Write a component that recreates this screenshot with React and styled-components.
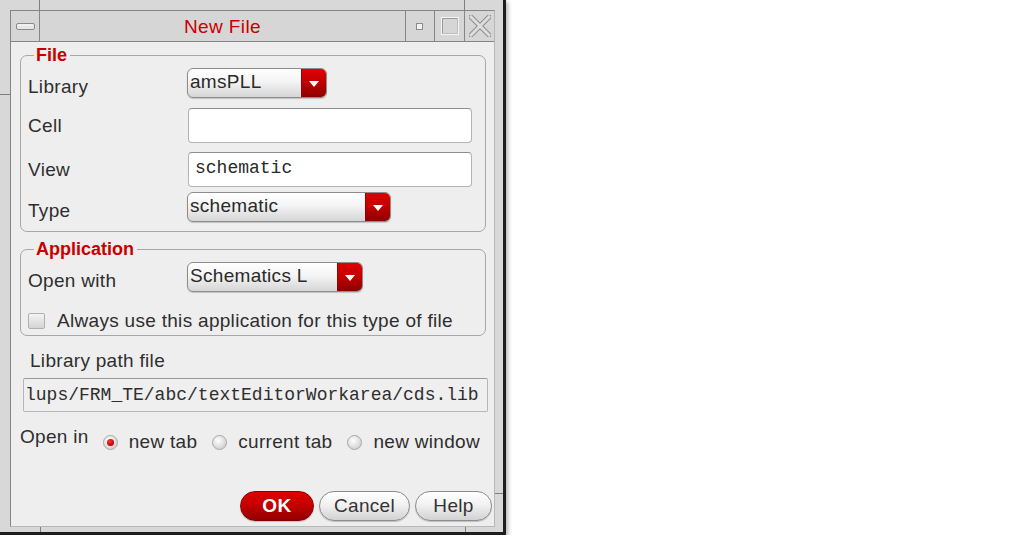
import React from 'react'
import styled, { createGlobalStyle } from 'styled-components'

const GlobalStyle = createGlobalStyle`
  body {
    margin: 0;
    background: #ffffff;
    font-family: 'Liberation Sans', Arial, sans-serif;
  }
`

const RED = '#c80000'
const TEXT = '#2e2e2e'

export default function App() {
  return (
    <>
      <GlobalStyle />
      <WindowStyled>
        <Tick $x={39} $y={0} $w={1} $h={10} />
        <Tick $x={464} $y={0} $w={1} $h={10} />
        <Tick $x={0} $y={94} $w={10} $h={1} />
        <Tick $x={495} $y={493} $w={8} $h={1} />
        <Tick $x={40} $y={527} $w={1} $h={5} />
        <Tick $x={465} $y={527} $w={1} $h={5} />
        <InnerStyled>
          <TitleBar>
            <TitleButton>
              <MinimizeIcon />
            </TitleButton>
            <Title>New File</Title>
            <TitleButton>
              <DotIcon />
            </TitleButton>
            <TitleButton>
              <MaximizeIcon />
            </TitleButton>
            <TitleButton>
              <CloseIcon />
            </TitleButton>
          </TitleBar>

          <Content>
            <Group $bottom={9}>
              <Legend>File</Legend>
              <FieldGrid>
                <Label $drop>Library</Label>
                <Select $width={140} value="amsPLL" />
                <Label $top={10}>Cell</Label>
                <TextInput $top={10} />
                <Label $top={9}>View</Label>
                <TextInput $top={9}>schematic</TextInput>
                <Label $top={5} $drop>Type</Label>
                <Select $width={204} $top={5} value="schematic" />
              </FieldGrid>
            </Group>

            <Group $top={7} $bottom={3}>
              <Legend>Application</Legend>
              <FieldGrid>
                <Label $drop>Open with</Label>
                <Select $width={176} value="Schematics L" />
              </FieldGrid>
              <CheckRow>
                <CheckBox />
                <span>Always use this application for this type of file</span>
              </CheckRow>
            </Group>

            <PathLabel>Library path file</PathLabel>
            <PathField>lups/FRM_TE/abc/textEditorWorkarea/cds.lib</PathField>

            <OpenInRow>
              <span>Open in</span>
              <RadioGroup>
                <RadioOption>
                  <Radio $checked />
                  new tab
                </RadioOption>
                <RadioOption>
                  <Radio />
                  current tab
                </RadioOption>
                <RadioOption>
                  <Radio />
                  new window
                </RadioOption>
              </RadioGroup>
            </OpenInRow>

            <ButtonRow>
              <Button $primary $width={74}>OK</Button>
              <Button $width={91}>Cancel</Button>
              <Button $width={77}>Help</Button>
            </ButtonRow>
          </Content>
        </InnerStyled>
      </WindowStyled>
    </>
  )
}

function Select({ value, $width, $top }) {
  return (
    <SelectStyled $width={$width} $top={$top}>
      <span>{value}</span>
      <SelectArrow />
    </SelectStyled>
  )
}

function MinimizeIcon() {
  return (
    <svg width="19" height="7" viewBox="0 0 19 7">
      <rect x="0.5" y="0.5" width="18" height="6" rx="1.5" fill="#e6e6e6" stroke="#8a8a8a" />
      <line x1="2" y1="2" x2="17" y2="2" stroke="#fafafa" />
    </svg>
  )
}

function DotIcon() {
  return (
    <svg width="7" height="7" viewBox="0 0 7 7">
      <rect x="0.5" y="0.5" width="6" height="6" fill="#f2f2f2" stroke="#8a8a8a" />
    </svg>
  )
}

function MaximizeIcon() {
  return (
    <svg width="18" height="18" viewBox="0 0 18 18">
      <rect x="0.5" y="0.5" width="17" height="17" fill="none" stroke="#f4f4f4" />
      <path d="M1.5 16.5 V1.5 H16.5" fill="none" stroke="#9a9a9a" />
      <path d="M1.5 16.5 H16.5 V1.5" fill="none" stroke="#bdbdbd" />
    </svg>
  )
}

function CloseIcon() {
  return (
    <svg width="22" height="22" viewBox="0 0 22 22">
      <path d="M2 2 L20 20 M20 2 L2 20" stroke="#8e8e8e" strokeWidth="5" strokeLinecap="square" />
      <path d="M2 2 L20 20 M20 2 L2 20" stroke="#dedede" strokeWidth="3" strokeLinecap="square" />
    </svg>
  )
}

const WindowStyled = styled.div`
  position: relative;
  box-sizing: border-box;
  width: 506px;
  height: 535px;
  padding: 10px 8px 5px 10px;
  background: #d8d8d8;
  border-right: 3px solid #1e1e1e;
  border-bottom: 3px solid #1e1e1e;
  box-shadow: 2px 2px 4px rgba(0, 0, 0, 0.3);
  display: flex;
  flex-direction: column;
`

const Tick = styled.span`
  position: absolute;
  left: ${p => p.$x}px;
  top: ${p => p.$y}px;
  width: ${p => p.$w}px;
  height: ${p => p.$h}px;
  background: #7e7e7e;
`

const InnerStyled = styled.div`
  flex: 1;
  display: flex;
  flex-direction: column;
  border: 1px solid #858585;
  border-right-color: #b8b8b8;
  border-bottom-color: #b8b8b8;
`

const TitleBar = styled.div`
  display: grid;
  grid-template-columns: 28px 1fr 29px 30px 30px;
  height: 30px;
  background: #d6d6d6;
  border-bottom: 1px solid #858585;
`

const TitleButton = styled.div`
  display: flex;
  align-items: center;
  justify-content: center;
  & + & {
    border-left: 1px solid #858585;
  }
`

const Title = styled.div`
  display: flex;
  align-items: center;
  justify-content: center;
  padding-top: 1px;
  border-left: 1px solid #858585;
  border-right: 1px solid #858585;
  margin-right: -1px;
  font-size: 19px;
  letter-spacing: 0.4px;
  color: ${RED};
`

const Content = styled.div`
  flex: 1;
  display: flex;
  flex-direction: column;
  padding: 3px 2px 5px 9px;
  background: #eeeeee;
  color: ${TEXT};
  font-size: 19px;
  letter-spacing: 0.3px;
`

const Group = styled.fieldset`
  margin: ${p => p.$top || 0}px 6px 0 0;
  padding: 3px 7px ${p => p.$bottom}px 7px;
  border: 1px solid #a7a7a7;
  border-radius: 7px;
  min-width: 0;
`

const Legend = styled.legend`
  margin-left: 6px;
  padding: 0 3px 0 2px;
  font-size: 18px;
  line-height: 20px;
  font-weight: bold;
  letter-spacing: 0;
  color: ${RED};
`

const FieldGrid = styled.div`
  display: grid;
  grid-template-columns: 159px 1fr;
  align-items: center;
`

const Label = styled.div`
  margin-top: ${p => p.$top || 0}px;
  padding-top: ${p => (p.$drop ? 7 : 0)}px;
  line-height: 22px;
`

const SelectStyled = styled.div`
  display: flex;
  box-sizing: border-box;
  width: ${p => p.$width}px;
  height: 30px;
  margin-top: ${p => p.$top || 0}px;
  border: 1px solid #8c8c8c;
  border-radius: 6px;
  overflow: hidden;
  background: linear-gradient(#ffffff, #f4f4f4 45%, #d6d6d6);
  box-shadow: 0 1px 1px rgba(0, 0, 0, 0.18);
  span {
    flex: 1;
    padding-left: 2px;
    line-height: 26px;
    color: #2a2a2a;
    white-space: nowrap;
  }
`

const SelectArrow = styled.div`
  width: 24px;
  display: flex;
  align-items: center;
  justify-content: center;
  border-left: 1px solid #9a0000;
  background: linear-gradient(#e00000, #c00000 50%, #8c0000);
  &::after {
    content: '';
    margin-top: 1px;
    border-left: 5px solid transparent;
    border-right: 5px solid transparent;
    border-top: 6px solid #ffffff;
  }
`

const TextInput = styled.div`
  box-sizing: border-box;
  width: 284px;
  height: 35px;
  margin: ${p => p.$top || 0}px 0 0 1px;
  padding: 0 6px;
  border: 1px solid #b4b4b4;
  border-top-color: #8e8e8e;
  border-radius: 4px;
  background: #ffffff;
  font-family: 'Liberation Mono', 'Courier New', monospace;
  font-size: 18px;
  letter-spacing: 0;
  line-height: 31px;
  color: #2a2a2a;
`

const CheckRow = styled.div`
  display: flex;
  align-items: center;
  gap: 12px;
  margin-top: 18px;
  line-height: 22px;
`

const CheckBox = styled.span`
  box-sizing: border-box;
  width: 17px;
  height: 16px;
  border: 1px solid #b0b0b0;
  border-radius: 2px;
  background: linear-gradient(#f4f4f4, #d4d4d4);
`

const PathLabel = styled.div`
  margin: 14px 0 0 10px;
  line-height: 22px;
`

const PathField = styled.div`
  box-sizing: border-box;
  height: 34px;
  margin: 6px 4px 0 3px;
  padding-left: 1px;
  border: 1px solid #b6b6b6;
  border-top-color: #9a9a9a;
  border-radius: 2px;
  background: #efefef;
  font-family: 'Liberation Mono', 'Courier New', monospace;
  font-size: 18px;
  letter-spacing: 0;
  line-height: 32px;
  white-space: nowrap;
  overflow: hidden;
`

const OpenInRow = styled.div`
  display: flex;
  align-items: flex-start;
  gap: 14px;
  margin-top: 14px;
  line-height: 22px;
`

const RadioGroup = styled.div`
  display: flex;
  gap: 15px;
  margin-top: 5px;
`

const RadioOption = styled.label`
  display: flex;
  align-items: center;
  gap: 11px;
`

const Radio = styled.span`
  position: relative;
  box-sizing: border-box;
  width: 15px;
  height: 15px;
  border-radius: 50%;
  border: 1px solid #a8a8a8;
  background: radial-gradient(circle at 40% 35%, #ffffff, #d2d2d2 75%);
  &::after {
    content: '';
    display: ${p => (p.$checked ? 'block' : 'none')};
    position: absolute;
    left: 3px;
    top: 3px;
    width: 7px;
    height: 7px;
    border-radius: 50%;
    background: radial-gradient(circle at 40% 35%, #ff3030, #c00000 70%);
  }
`

const ButtonRow = styled.div`
  display: flex;
  justify-content: flex-end;
  gap: 5px;
  margin-top: auto;
`

const Button = styled.button`
  box-sizing: border-box;
  width: ${p => p.$width}px;
  height: 30px;
  padding: 0;
  border-radius: 15px;
  border: 1px solid ${p => (p.$primary ? '#8a0000' : '#8c8c8c')};
  background: ${p =>
    p.$primary
      ? 'linear-gradient(#e00000, #c20000 50%, #900000)'
      : 'linear-gradient(#ffffff, #f2f2f2 45%, #d2d2d2)'};
  box-shadow: 0 1px 1px rgba(0, 0, 0, 0.2);
  font-family: 'Liberation Sans', Arial, sans-serif;
  font-size: 19px;
  font-weight: ${p => (p.$primary ? 'bold' : 'normal')};
  letter-spacing: ${p => (p.$primary ? '0.5px' : '0.3px')};
  color: ${p => (p.$primary ? '#ffffff' : '#333333')};
`
